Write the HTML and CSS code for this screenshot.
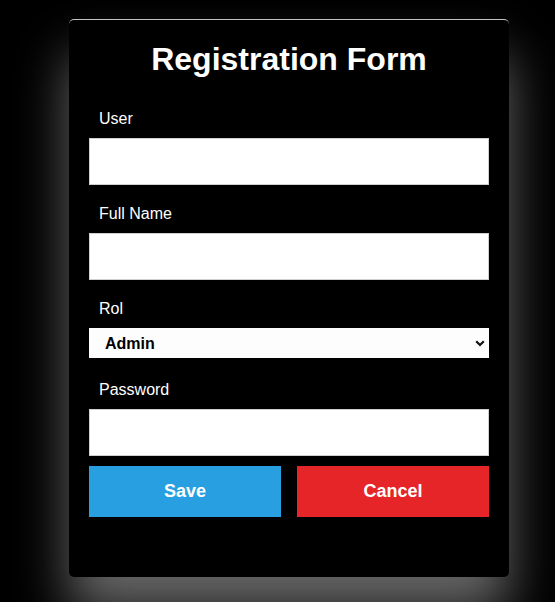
FILE: index.html
```html
<!DOCTYPE html>
<html lang="en">
<head>
<meta charset="utf-8">
<title>Registration Form</title>
<link rel="stylesheet" href="styles.css">
</head>
<body>
<form class="card">
  <h1 class="title">Registration Form</h1>
  <div class="field">
    <label class="label" for="user">User</label>
    <input class="input" id="user" type="text">
  </div>
  <div class="field">
    <label class="label" for="fullname">Full Name</label>
    <input class="input" id="fullname" type="text">
  </div>
  <div class="field field-select">
    <label class="label" for="rol">Rol</label>
    <div class="select-wrap">
      <select class="select" id="rol">
        <option>Admin</option>
        <option>User</option>
      </select>
      <svg class="chevron" width="10" height="7" viewBox="0 0 10 7"><path d="M1.2 1.2 L5 5 L8.8 1.2" fill="none" stroke="#111" stroke-width="2.2"/></svg>
    </div>
  </div>
  <div class="field field-last">
    <label class="label" for="password">Password</label>
    <input class="input" id="password" type="password">
  </div>
  <div class="actions">
    <button class="btn btn-save" type="button">Save</button>
    <button class="btn btn-cancel" type="button">Cancel</button>
  </div>
</form>
</body>
</html>
```

FILE: styles.css
```css
html, body {
  margin: 0;
  background: #000;
}
body {
  padding: 19px 0 0 69px;
  font-family: "Liberation Sans", Arial, sans-serif;
  height: 602px;
  box-sizing: border-box;
  overflow: hidden;
}
.card {
  width: 440px;
  box-sizing: border-box;
  background: #000;
  border-top: 1px solid #c4c4c4;
  border-radius: 5px;
  padding: 0 20px 60px;
  box-shadow: 0 36px 52px rgba(255, 255, 255, 0.4);
  display: flex;
  flex-direction: column;
}
.title {
  margin: 21px 0 31px;
  font-size: 32px;
  line-height: 37px;
  font-weight: bold;
  color: #fff;
  text-align: center;
}
.field {
  display: flex;
  flex-direction: column;
  margin-bottom: 19px;
}
.field-select {
  margin-bottom: 22px;
}
.field-last {
  margin-bottom: 10px;
}
.label {
  color: #fff;
  font-size: 16px;
  line-height: 18px;
  padding: 1px 0 0 10px;
  margin-bottom: 10px;
}
.input {
  display: block;
  height: 47px;
  box-sizing: border-box;
  border: 1px solid #cfcfcf;
  background: #fff;
  margin: 0;
  padding: 0 10px;
  font-size: 16px;
  font-family: inherit;
}
.select-wrap {
  position: relative;
}
.select {
  display: block;
  width: 100%;
  height: 30px;
  box-sizing: border-box;
  appearance: none;
  -webkit-appearance: none;
  border: none;
  border-radius: 0;
  background: #fdfdfd;
  margin: 0;
  padding: 0 0 0 16px;
  font-family: inherit;
  font-size: 16px;
  font-weight: bold;
  color: #000;
}
.chevron {
  position: absolute;
  right: 4px;
  top: 12px;
}
.actions {
  display: flex;
  gap: 16px;
}
.btn {
  flex: 1;
  height: 51px;
  border: none;
  margin: 0;
  color: #fff;
  font-family: inherit;
  font-size: 18px;
  font-weight: bold;
}
.btn-save {
  background: #279fe0;
}
.btn-cancel {
  background: #e52528;
}
```
